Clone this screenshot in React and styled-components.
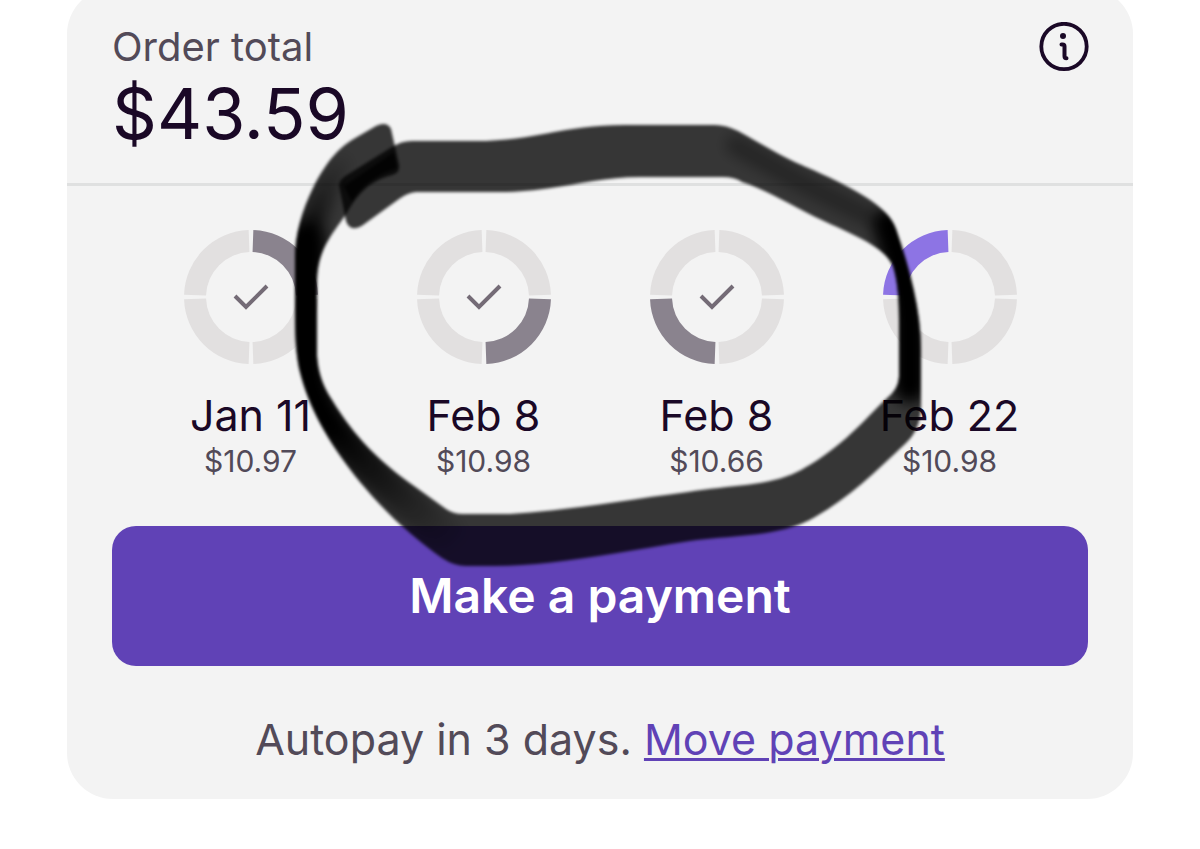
import styled, { createGlobalStyle } from "styled-components";

const ink = "#1a0826";
const muted = "#524a58";
const purple = "#6042b6";

const GlobalStyle = createGlobalStyle`
    * {
        box-sizing: border-box;
    }

    body {
        margin: 0;
        background: #ffffff;
        font-family: Inter, "Liberation Sans", sans-serif;
        color: ${ink};
    }
`;

const Page = styled.main`
    display: flow-root;
    min-height: 100vh;
    padding: 0 67px;
    overflow: hidden;
`;

const Card = styled.section`
    position: relative;
    margin-top: -12px;
    background: #f3f3f3;
    border-radius: 46px;
`;

const Header = styled.header`
    display: flex;
    justify-content: space-between;
    align-items: flex-start;
    padding: 34px 44px 27px 45px;
    border-bottom: 3px solid #dfe0e0;
`;

const Label = styled.h1`
    margin: 0;
    font-size: 40px;
    font-weight: 400;
    line-height: 50px;
    color: ${muted};
`;

const Total = styled.div`
    font-size: 70px;
    font-weight: 400;
    line-height: 84px;
`;

const InfoButton = styled.button`
    display: flex;
    padding: 0;
    border: 0;
    background: none;
    color: ${ink};
    cursor: pointer;
`;

const Schedule = styled.ol`
    display: grid;
    grid-template-columns: repeat(4, 1fr);
    margin: 0;
    padding: 44px 67px 42px;
    list-style: none;
`;

const Installment = styled.li`
    display: flex;
    flex-direction: column;
    align-items: center;
`;

const DueDate = styled.div`
    margin-top: 28px;
    font-size: 43px;
    line-height: 46px;
    white-space: nowrap;
`;

const Amount = styled.div`
    font-size: 30px;
    line-height: 46px;
    color: ${muted};
`;

const Actions = styled.div`
    padding: 0 45px 36px;
`;

const PayButton = styled.button`
    display: block;
    width: 100%;
    height: 140px;
    padding: 0 0 2px;
    border: 0;
    border-radius: 24px;
    background: ${purple};
    color: #ffffff;
    font: 600 48px Inter, "Liberation Sans", sans-serif;
    cursor: pointer;
`;

const Autopay = styled.p`
    margin: 49px 0 0;
    font-size: 43px;
    line-height: 48px;
    text-align: center;
    color: ${muted};
`;

const MoveLink = styled.a`
    color: ${purple};
    text-decoration-thickness: 3px;
    text-underline-offset: 3px;
`;

const Marker = styled.svg`
    position: absolute;
    top: 12px;
    left: 0;
    width: 100%;
    pointer-events: none;
`;

const installments = [
    { date: "Jan 11", amount: "$10.97", paid: true },
    { date: "Feb 8", amount: "$10.98", paid: true },
    { date: "Feb 8", amount: "$10.66", paid: true },
    { date: "Feb 22", amount: "$10.98", paid: false },
];

function point(radius, degrees) {
    const a = (degrees * Math.PI) / 180;
    return `${(67 + radius * Math.sin(a)).toFixed(2)} ${(67 - radius * Math.cos(a)).toFixed(2)}`;
}

function slice(n) {
    const from = n * 90 + 2;
    const to = n * 90 + 88;
    return `M${point(67, from)}A67 67 0 0 1 ${point(67, to)}L${point(45, to)}A45 45 0 0 0 ${point(45, from)}Z`;
}

function Ring({ active, paid }) {
    return (
        <svg width="134" height="134" viewBox="0 0 134 134" aria-hidden="true">
            {[0, 1, 2, 3].map((n) => (
                <path key={n} d={slice(n)} fill={n !== active ? "#e2e0e0" : paid ? "#8a838e" : "#8d74e4"} />
            ))}
            {paid && <path d="M51 66L62 77L83 56" fill="none" stroke="#746b76" strokeWidth="4" />}
        </svg>
    );
}

function InfoIcon() {
    return (
        <svg width="50" height="50" viewBox="0 0 50 50" fill="none" stroke="currentColor" aria-hidden="true">
            <circle cx="25" cy="24.5" r="22.7" strokeWidth="3.8" />
            <circle cx="24" cy="14" r="3" fill="currentColor" stroke="none" />
            <path d="M22.5 22.5H23.5Q25.5 22.5 25.5 24.5V34Q25.5 36.3 27.5 36.3" strokeWidth="4" strokeLinecap="round" />
        </svg>
    );
}

// the stroke starts at the top left, runs clockwise and crosses over its own start
const loop =
    "M339 185Q340 179 347 175L392 147Q401 141 412 141H475C535 141 563 125 625 125H715Q726 125 738 131" +
    "C762 144 780 156 806 167C850 186 889 206 896 229C910 270 921 310 921 350V405Q921 429 906 443" +
    "C875 472 850 497 815 517C782 537 732 535 690 541C615 553 550 566 495 566H466Q454 566 442 558" +
    "C402 529 382 508 360 482C332 447 310 412 300 372C295 350 295 330 295 290H317V356" +
    "C318 371 322 385 332 400C355 438 380 462 414 486L446 509Q453 514 463 514H510" +
    "C565 511 625 500 688 492C730 485 769 486 797 472C840 450 864 420 886 399Q899 389 899 376V322" +
    "C899 300 898 283 893 266C885 247 854 235 826 222C795 208 770 191 742 182Q735 177 722 177H640" +
    "C590 177 557 192 500 192H416Q407 193 399 199L363 225Q350 233 346 221Z";

const tail =
    "M295 300V258C295 235 302 210 313 188C328 158 341 146 357 137L376 126Q387 121 391 129" +
    "L399 165Q400 173 392 175C368 181 356 197 348 211C335 232 318 246 317 280V300Z";

function MarkerLoop() {
    return (
        <Marker viewBox="67 0 1066 799" aria-hidden="true">
            <defs>
                <filter id="edge" x="-5%" y="-5%" width="110%" height="110%">
                    <feGaussianBlur stdDeviation="1.8" />
                </filter>
                <filter id="soft" x="-20%" y="-20%" width="140%" height="140%">
                    <feGaussianBlur stdDeviation="7" />
                </filter>
                <linearGradient id="fade" gradientUnits="userSpaceOnUse" x1="340" y1="420" x2="465" y2="545">
                    <stop offset="0" stopColor="#000000" />
                    <stop offset="1" stopColor="#000000" stopOpacity="0" />
                </linearGradient>
                <linearGradient id="rise" gradientUnits="userSpaceOnUse" x1="0" y1="260" x2="0" y2="150">
                    <stop offset="0" stopColor="#000000" />
                    <stop offset="1" stopColor="#000000" stopOpacity="0" />
                </linearGradient>
                <clipPath id="inside">
                    <path d={loop} />
                    <path d={tail} />
                </clipPath>
            </defs>
            <g filter="url(#edge)">
                <path d={loop} opacity="0.78" />
                <path d={tail} opacity="0.78" />
                <path d="M344 186L394 152L397 168Q366 178 352 202Z" opacity="0.7" />
                <g clipPath="url(#inside)">
                    <g filter="url(#soft)" fill="none" strokeLinecap="round">
                        <path d="M340 160Q302 222 304 290" stroke="url(#rise)" strokeWidth="24" />
                        <path d="M304 285V340Q306 390 330 425Q390 495 455 540" stroke="url(#fade)" strokeWidth="34" />
                        <path d="M306 240V370" stroke="#000000" strokeWidth="40" />
                        <path d="M735 145L800 182L880 222" stroke="#000000" strokeWidth="20" opacity="0.3" />
                        <path d="M890 225Q910 290 910 330V386" stroke="#000000" strokeWidth="34" />
                    </g>
                </g>
            </g>
        </Marker>
    );
}

export default function App() {
    return (
        <>
            <GlobalStyle />
            <Page>
                <Card>
                    <Header>
                        <div>
                            <Label>Order total</Label>
                            <Total>$43.59</Total>
                        </div>
                        <InfoButton type="button" aria-label="Order information">
                            <InfoIcon />
                        </InfoButton>
                    </Header>
                    <Schedule>
                        {installments.map((item, i) => (
                            <Installment key={i}>
                                <Ring active={i} paid={item.paid} />
                                <DueDate>{item.date}</DueDate>
                                <Amount>{item.amount}</Amount>
                            </Installment>
                        ))}
                    </Schedule>
                    <Actions>
                        <PayButton type="button">Make a payment</PayButton>
                        <Autopay>
                            Autopay in 3 days. <MoveLink href="#move">Move payment</MoveLink>
                        </Autopay>
                    </Actions>
                    <MarkerLoop />
                </Card>
            </Page>
        </>
    );
}
